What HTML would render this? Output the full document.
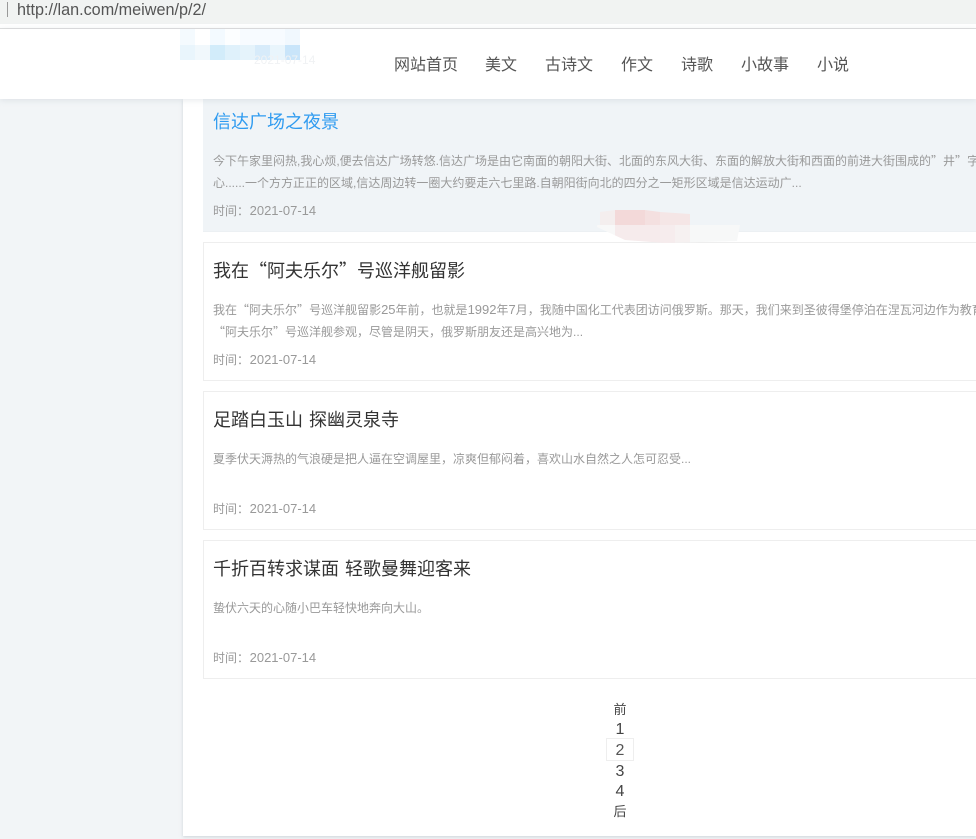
<!DOCTYPE html>
<html lang="zh"><head><meta charset="utf-8"><title>美文</title>
<style>
html,body{margin:0;padding:0;width:976px;height:839px;overflow:hidden;background:#f2f5f7;font-family:"Liberation Sans","Noto Sans CJK SC",sans-serif;}
.a{position:absolute;white-space:nowrap;}
.card{position:absolute;left:203px;width:800px;height:137px;border:1px solid #eeeeee;background:#fff;}
.t{position:absolute;left:213px;font-size:18px;line-height:24px;height:24px;color:#333;white-space:nowrap;word-spacing:1px;}
.d{position:absolute;left:213px;font-size:12px;line-height:24px;height:24px;color:#999;white-space:nowrap;}
.d b{font-weight:normal;font-size:13px;line-height:1;}
.m{position:absolute;left:213px;font-size:12px;line-height:20px;color:#999;white-space:nowrap;}
.m b{font-weight:normal;font-size:13px;margin-left:.6px;}
.q{font-family:"Noto Sans CJK SC",sans-serif;line-height:1;}
.n{position:absolute;top:54px;font-size:16px;line-height:24px;color:#555;white-space:nowrap;}
.p{position:absolute;left:600px;width:40px;text-align:center;color:#444;line-height:20px;}
.b{position:absolute;}
</style></head><body>
<div class="a" style="left:0;top:0;width:976px;height:24px;background:#f1f3f2"></div>
<div class="a" style="left:7px;top:2px;width:1px;height:15px;background:#999"></div>
<div class="a" style="left:17px;top:0;font-size:16.2px;line-height:20px;color:#555">http://lan.com/meiwen/p/2/</div>
<div class="a" style="left:0;top:24px;width:976px;height:4px;background:#fff"></div>
<div class="a" style="left:0;top:28px;width:976px;height:1px;background:#dedede"></div>

<div class="a" style="left:183px;top:99px;width:793px;height:737px;background:#fff;box-shadow:0 1px 3px rgba(170,180,190,.5)"></div>
<div class="a" style="left:203px;top:99px;width:773px;height:132px;background:#f0f4f7;border-bottom:1px solid #ecf0f3"></div>
<div class="a" style="left:0;top:29px;width:976px;height:70px;background:#fff;box-shadow:0 1px 6px rgba(170,180,190,.3)"></div>

<div class="b" style="left:180px;top:29px;width:15px;height:16px;background:#f4fafe"></div>
<div class="b" style="left:210px;top:29px;width:15px;height:16px;background:#f3faff"></div>
<div class="b" style="left:225px;top:29px;width:15px;height:16px;background:#fcfeff"></div>
<div class="b" style="left:240px;top:29px;width:45px;height:16px;background:#f7fbff"></div>
<div class="b" style="left:285px;top:29px;width:15px;height:16px;background:#f1f8fe"></div>
<div class="b" style="left:180px;top:45px;width:15px;height:15px;background:#e9f5fc"></div>
<div class="b" style="left:195px;top:45px;width:15px;height:15px;background:#f1f8fc"></div>
<div class="b" style="left:210px;top:45px;width:15px;height:15px;background:#d2ecfa"></div>
<div class="b" style="left:225px;top:45px;width:15px;height:15px;background:#dff1fb"></div>
<div class="b" style="left:240px;top:45px;width:15px;height:15px;background:#e5f3fb"></div>
<div class="b" style="left:255px;top:45px;width:15px;height:15px;background:#d7ebfa"></div>
<div class="b" style="left:270px;top:45px;width:15px;height:15px;background:#e9f5fc"></div>
<div class="b" style="left:285px;top:45px;width:15px;height:15px;background:#c9e5fa"></div>
<div class="a" style="left:254px;top:53px;font-size:12px;line-height:14px;color:#f0f2f4">2021-07-14</div>

<div class="n" style="left:394px">网站首页</div>
<div class="n" style="left:485px">美文</div>
<div class="n" style="left:545px">古诗文</div>
<div class="n" style="left:621px">作文</div>
<div class="n" style="left:681px">诗歌</div>
<div class="n" style="left:741px">小故事</div>
<div class="n" style="left:817px">小说</div>

<div class="t" style="top:110px;color:#2f9bf0">信达广场之夜景</div>
<div class="d" style="top:149px">今下午家里闷热,我心烦,便去信达广场转悠.信达广场是由它南面的朝阳大街、北面的东风大街、东面的解放大街和西面的前进大街围成的<span class="q">”</span>井<span class="q">”</span>字</div>
<div class="d" style="top:171px">心......一个方方正正的区域,信达周边转一圈大约要走六七里路.自朝阳街向北的四分之一矩形区域是信达运动广...</div>
<div class="m" style="top:201px">时间：<b>2021-07-14</b></div>

<div class="card" style="top:242px"></div>
<div class="t" style="top:259px">我在<span class="q">“</span>阿夫乐尔<span class="q">”</span>号巡洋舰留影</div>
<div class="d" style="top:298px">我在<span class="q">“</span>阿夫乐尔<span class="q">”</span>号巡洋舰留影<b>25</b>年前，也就是<b>1992</b>年<b>7</b>月，我随中国化工代表团访问俄罗斯。那天，我们来到圣彼得堡停泊在涅瓦河边作为教育</div>
<div class="d" style="top:320px"><span class="q">“</span>阿夫乐尔<span class="q">”</span>号巡洋舰参观，尽管是阴天，俄罗斯朋友还是高兴地为...</div>
<div class="m" style="top:350px">时间：<b>2021-07-14</b></div>

<div class="card" style="top:391px"></div>
<div class="t" style="top:408px">足踏白玉山 探幽灵泉寺</div>
<div class="d" style="top:447px">夏季伏天溽热的气浪硬是把人逼在空调屋里，凉爽但郁闷着，喜欢山水自然之人怎可忍受...</div>
<div class="m" style="top:499px">时间：<b>2021-07-14</b></div>

<div class="card" style="top:540px"></div>
<div class="t" style="top:557px">千折百转求谋面 轻歌曼舞迎客来</div>
<div class="d" style="top:596px">蛰伏六天的心随小巴车轻快地奔向大山。</div>
<div class="m" style="top:648px">时间：<b>2021-07-14</b></div>

<div class="b" style="left:597px;top:210px;width:143px;height:33px;overflow:hidden;clip-path:polygon(3px 2px,18px 0,48px 0,63px 2px,93px 4px,93px 15px,143px 15px,140px 31px,68px 33px,28px 30px,0 17px)">
<div class="b" style="left:3px;top:0;width:15px;height:15px;background:#f4eeee"></div>
<div class="b" style="left:18px;top:0;width:30px;height:15px;background:#f3d9d9"></div>
<div class="b" style="left:48px;top:0;width:15px;height:15px;background:#f4e0e0"></div>
<div class="b" style="left:63px;top:0;width:30px;height:15px;background:#f5e6e6"></div>
<div class="b" style="left:0;top:15px;width:18px;height:18px;background:#f8f8f8"></div>
<div class="b" style="left:18px;top:15px;width:45px;height:18px;background:#f6ebec"></div>
<div class="b" style="left:63px;top:15px;width:15px;height:18px;background:#f6eced"></div>
<div class="b" style="left:78px;top:15px;width:15px;height:18px;background:#f6f1f1"></div>
<div class="b" style="left:93px;top:15px;width:50px;height:18px;background:#f7f8f8"></div>
</div>

<div class="p" style="top:700px;font-size:13px">前</div>
<div class="p" style="top:720px;font-size:16px">1</div>
<div class="b" style="left:606px;top:738px;width:26px;height:21px;border:1px solid #eeeeee"></div>
<div class="p" style="top:741px;font-size:16px;color:#555">2</div>
<div class="p" style="top:762px;font-size:16px">3</div>
<div class="p" style="top:782px;font-size:16px">4</div>
<div class="p" style="top:802px;font-size:13px">后</div>
</body></html>
